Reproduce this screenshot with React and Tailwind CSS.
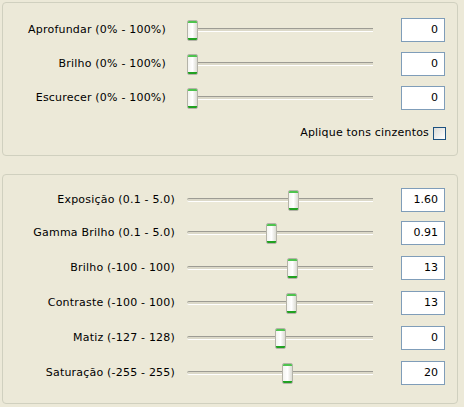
import React from 'react';

const topRows = [
  { label: 'Aprofundar (0% - 100%)', value: '0', pos: 0 },
  { label: 'Brilho (0% - 100%)', value: '0', pos: 0 },
  { label: 'Escurecer (0% - 100%)', value: '0', pos: 0 },
];

const bottomRows = [
  { label: 'Exposição (0.1 - 5.0)', value: '1.60', pos: 101, mt: 'mt-0' },
  { label: 'Gamma Brilho (0.1 - 5.0)', value: '0.91', pos: 79, mt: 'mt-[9px]' },
  { label: 'Brilho (-100 - 100)', value: '13', pos: 100, mt: 'mt-[11px]' },
  { label: 'Contraste (-100 - 100)', value: '13', pos: 99, mt: 'mt-[11px]' },
  { label: 'Matiz (-127 - 128)', value: '0', pos: 88, mt: 'mt-[11px]' },
  { label: 'Saturação (-255 - 255)', value: '20', pos: 95, mt: 'mt-[11px]' },
];

const Slider = ({ pos }) => (
  <div className="relative w-[186px] h-[24px] flex items-center">
    <div className="w-full h-[4px] border-t border-[#9d9c94] bg-[#dcd9c9] border-b border-b-white rounded-l-[2px]" />
    <div
      className="absolute top-[2px] w-[11px] h-[21px] rounded-[2px] border border-[#b4b3a8] bg-gradient-to-r from-[#f4f4f0] via-white to-[#dcdcd4] overflow-hidden"
      style={{ left: pos }}
    >
      <div className="h-[2px] bg-[#4fc34f]" />
      <div className="absolute bottom-0 left-0 right-0 h-[2px] bg-[#21a121]" />
    </div>
  </div>
);

const Row = ({ label, value, pos, labelW, gap, className = '' }) => (
  <div className={`flex items-center h-[24px] ${className}`}>
    <div className={`${labelW} text-right whitespace-nowrap tracking-[0.2px]`}>{label}</div>
    <div className={gap} />
    <Slider pos={pos} />
    <div className="w-[28px]" />
    <div className="w-[44px] h-[24px] border border-[#7f9db9] bg-white flex items-center justify-end pr-[6px]">
      {value}
    </div>
  </div>
);

export default function App() {
  return (
    <div
      className="w-[464px] h-[407px] bg-[#ece9d8] pt-[2px] pl-[2px] text-[11px] text-black"
      style={{ fontFamily: 'Tahoma, "DejaVu Sans", sans-serif' }}
    >
      {/* grupo de cima */}
      <div className="w-[456px] h-[154px] border border-[#d0d0bf] rounded-[4px] pt-[15px] flex flex-col">
        {topRows.map((r, i) => (
          <Row
            key={r.label}
            {...r}
            labelW="w-[163px]"
            gap="w-[21px]"
            className={i === 0 ? '' : 'mt-[10px]'}
          />
        ))}
        <div className="flex items-center justify-end mt-[17px] pr-[11px] h-[13px]">
          <span className="mr-[4px] whitespace-nowrap tracking-[0.2px]">Aplique tons cinzentos</span>
          <div className="w-[13px] h-[13px] border border-[#1c5180] bg-gradient-to-br from-[#dcdcd7] to-white" />
        </div>
      </div>

      {/* grupo de baixo */}
      <div className="w-[456px] h-[230px] mt-[18px] border border-[#d0d0bf] rounded-[4px] pt-[13px] flex flex-col">
        {bottomRows.map((r) => (
          <Row key={r.label} {...r} labelW="w-[172px]" gap="w-[12px]" className={r.mt} />
        ))}
      </div>
    </div>
  );
}
